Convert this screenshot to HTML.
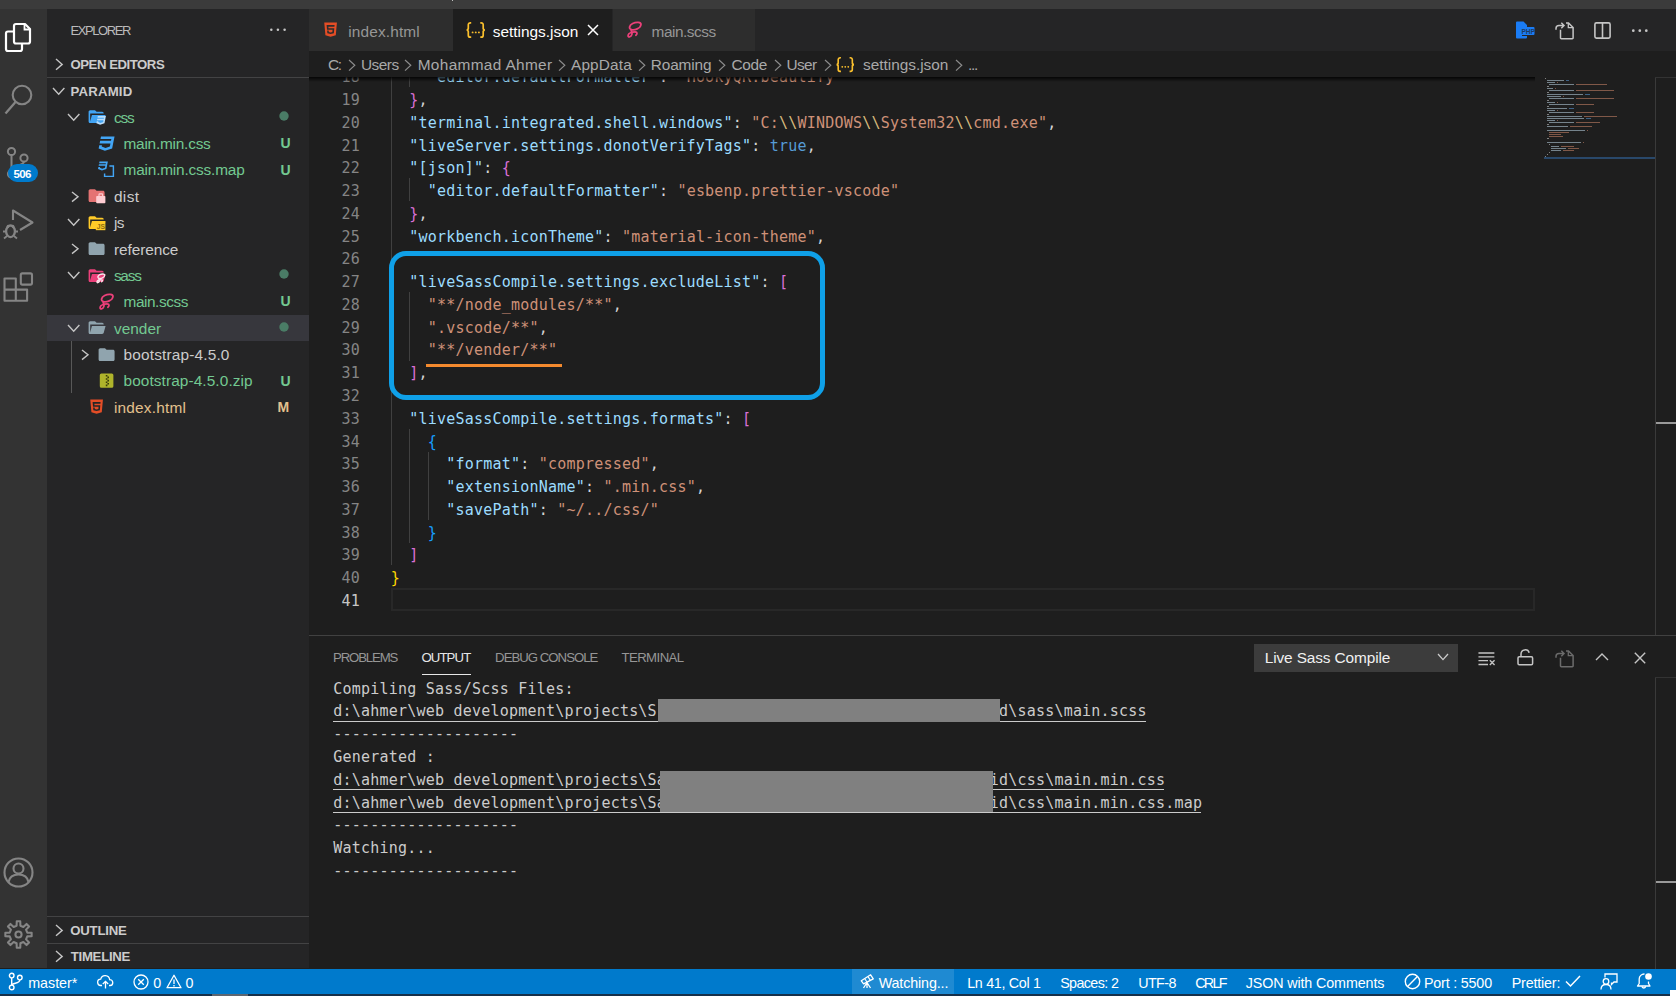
<!DOCTYPE html>
<html lang="en">
<head>
<meta charset="utf-8">
<title>settings.json - paramid - Visual Studio Code</title>
<style>
html,body{margin:0;padding:0;}
body{width:1680px;height:996px;overflow:hidden;background:#1e1e1e;position:relative;font-family:"Liberation Sans",sans-serif;}
#app{position:absolute;left:0;top:0;width:1680px;height:996px;overflow:hidden;}
#app>div,#app>span,#app>svg{position:absolute;display:block;white-space:pre;}
#app svg{overflow:visible;}
</style>
</head>
<body>
<div id="app">
<!-- ===== base surfaces ===== -->
<div style="left:0px;top:0px;width:1676px;height:8.6px;background:#3b3b3b;"></div>
<div style="left:0px;top:8.6px;width:47px;height:959.9px;background:#333333;"></div>
<div style="left:47px;top:8.6px;width:262px;height:959.9px;background:#252526;"></div>
<div style="left:309px;top:8.6px;width:1367px;height:42.0px;background:#252526;"></div>
<div style="left:309px;top:50.6px;width:1367px;height:917.9px;background:#1e1e1e;"></div>
<div style="left:1676px;top:0px;width:4px;height:996px;background:#ffffff;"></div>
<!-- ===== activity bar ===== -->
<svg style="left:4px;top:22px;" width="28" height="31" viewBox="0 0 28 31"><path d="M10 9.5 V4 a2 2 0 0 1 2 -2 h9 l5 5 v12.5 a2 2 0 0 1 -2 2 H12 a2 2 0 0 1 -2 -2 V9.5 H4 a2 2 0 0 0 -2 2 V27 a2 2 0 0 0 2 2 h12 a2 2 0 0 0 2 -2 v-5.5" fill="none" stroke="#ffffff" stroke-width="2.2" stroke-linejoin="round"/>
<path d="M20.5 2.5 v5 h5" fill="none" stroke="#ffffff" stroke-width="1.8"/></svg>
<svg style="left:3px;top:83px;" width="32" height="34" viewBox="0 0 32 34"><circle cx="19" cy="12" r="9.3" fill="none" stroke="#858585" stroke-width="2.1"/>
<path d="M12.5 19 L2.5 30.5" stroke="#858585" stroke-width="2.3" fill="none"/></svg>
<svg style="left:3px;top:144px;" width="34" height="40" viewBox="0 0 34 40"><circle cx="8.5" cy="7.5" r="3.6" fill="none" stroke="#858585" stroke-width="2"/>
<circle cx="21" cy="14" r="3.6" fill="none" stroke="#858585" stroke-width="2"/>
<path d="M8.5 11 V27 M21 17.5 c0 5 -12.5 3 -12.5 9" fill="none" stroke="#858585" stroke-width="2"/>
<circle cx="8.5" cy="30" r="3.6" fill="none" stroke="#858585" stroke-width="2"/></svg>
<div style="left:7.5px;top:164px;width:30px;height:18px;background:#007acc;border-radius:9px;"></div>
<span style="left:13.50px;top:166.52px;font-size:11.5px;line-height:15px;color:#ffffff;font-weight:700;letter-spacing:-0.594px;">506</span>
<svg style="left:2px;top:208px;" width="34" height="34" viewBox="0 0 34 34"><path d="M11 12 V2.5 L30.5 14.5 L18 22" fill="none" stroke="#858585" stroke-width="2.1" stroke-linejoin="round"/>
<ellipse cx="8.5" cy="23.3" rx="4.4" ry="5.8" fill="none" stroke="#858585" stroke-width="2.3"/>
<path d="M5 17.5 l2 2 M12 17.5 l-2 2 M1 23.5 h3.5 M12.5 23.5 h3.5 M2 30.5 l3 -2.5 M15 30.5 l-3 -2.5" fill="none" stroke="#858585" stroke-width="1.8"/></svg>
<svg style="left:3px;top:271px;" width="32" height="32" viewBox="0 0 32 32"><path d="M1.5 7.5 h11.3 v22.3 h-11.3 z M12.8 18.6 h11.3 v11.2 h-11.3 M1.5 18.6 h11.3" fill="none" stroke="#858585" stroke-width="2.1" stroke-linejoin="round"/>
<rect x="17.8" y="2.4" width="11.2" height="11.2" rx="1.5" fill="none" stroke="#858585" stroke-width="2.1"/></svg>
<svg style="left:3px;top:857px;" width="31" height="31" viewBox="0 0 31 31"><circle cx="15.5" cy="15.5" r="14" fill="none" stroke="#858585" stroke-width="2.1"/>
<circle cx="15.5" cy="11.5" r="5" fill="none" stroke="#858585" stroke-width="2.1"/>
<path d="M5.5 25 c1 -5 5 -7.5 10 -7.5 s9 2.5 10 7.5" fill="none" stroke="#858585" stroke-width="2.1"/></svg>
<svg style="left:3.5px;top:919.6px;" width="29" height="29" viewBox="0 0 31 31"><circle cx="15.5" cy="15.5" r="3.3" fill="none" stroke="#858585" stroke-width="2.2"/>
<path d="M13.48 6.12 L13.61 1.43 L17.39 1.43 L17.52 6.12 L20.71 7.44 L24.11 4.21 L26.79 6.89 L23.56 10.29 L24.88 13.48 L29.57 13.61 L29.57 17.39 L24.88 17.52 L23.56 20.71 L26.79 24.11 L24.11 26.79 L20.71 23.56 L17.52 24.88 L17.39 29.57 L13.61 29.57 L13.48 24.88 L10.29 23.56 L6.89 26.79 L4.21 24.11 L7.44 20.71 L6.12 17.52 L1.43 17.39 L1.43 13.61 L6.12 13.48 L7.44 10.29 L4.21 6.89 L6.89 4.21 L10.29 7.44 Z" fill="none" stroke="#858585" stroke-width="2.2" stroke-linejoin="round"/></svg>
<!-- ===== sidebar / explorer ===== -->
<span style="left:70.50px;top:22.00px;font-size:13px;line-height:17px;color:#bbbbbb;letter-spacing:-1.416px;">EXPLORER</span>
<svg style="left:268px;top:27px;" width="20" height="6" viewBox="0 0 20 6"><circle cx="3.3" cy="2.8" r="1.25" fill="#c5c5c5"/><circle cx="9.9" cy="2.8" r="1.25" fill="#c5c5c5"/><circle cx="16.6" cy="2.8" r="1.25" fill="#c5c5c5"/></svg>
<svg style="left:54.9px;top:58.199999999999996px;" width="8.2" height="12.8" viewBox="0 0 8.2 12.8"><path d="M1 1 L7.2 6.4 L1 11.8" fill="none" stroke="#c5c5c5" stroke-width="1.4"/></svg>
<span style="left:70.50px;top:55.73px;font-size:13.2px;line-height:17px;color:#cccccc;font-weight:700;letter-spacing:-0.475px;">OPEN EDITORS</span>
<div style="left:47px;top:77px;width:262px;height:1px;background:#434344;"></div>
<svg style="left:51.8px;top:87.4px;" width="13.4" height="8.2" viewBox="0 0 13.4 8.2"><path d="M1 1 L6.7 7.2 L12.4 1" fill="none" stroke="#c5c5c5" stroke-width="1.4"/></svg>
<span style="left:70.50px;top:82.73px;font-size:13.2px;line-height:17px;color:#cccccc;font-weight:700;letter-spacing:0.190px;">PARAMID</span>
<div style="left:47px;top:916px;width:262px;height:1px;background:#434344;"></div>
<svg style="left:54.9px;top:924.0px;" width="8.2" height="12.8" viewBox="0 0 8.2 12.8"><path d="M1 1 L7.2 6.4 L1 11.8" fill="none" stroke="#c5c5c5" stroke-width="1.4"/></svg>
<span style="left:70.20px;top:922.13px;font-size:13.2px;line-height:17px;color:#cccccc;font-weight:700;letter-spacing:-0.198px;">OUTLINE</span>
<div style="left:47px;top:943px;width:262px;height:1px;background:#434344;"></div>
<svg style="left:54.9px;top:950.4px;" width="8.2" height="12.8" viewBox="0 0 8.2 12.8"><path d="M1 1 L7.2 6.4 L1 11.8" fill="none" stroke="#c5c5c5" stroke-width="1.4"/></svg>
<span style="left:70.70px;top:947.93px;font-size:13.2px;line-height:17px;color:#cccccc;font-weight:700;letter-spacing:-0.264px;">TIMELINE</span>
<div style="left:47px;top:314.98px;width:262px;height:25.8px;background:#37373d;"></div>
<div style="left:71px;top:340.88px;width:1px;height:52.5px;background:#585858;"></div>
<svg style="left:67.3px;top:112.7px;" width="13.4" height="8.2" viewBox="0 0 13.4 8.2"><path d="M1 1 L6.7 7.2 L12.4 1" fill="none" stroke="#c5c5c5" stroke-width="1.4"/></svg>
<svg style="left:86.9px;top:107.4px;" width="19.2" height="19.2" viewBox="0 0 24 24"><path d="M19 20H4c-1.11 0-2-.9-2-2V6c0-1.11.89-2 2-2h6l2 2h7a2 2 0 0 1 2 2H4v10l2.14-8h17.07l-2.28 8.5c-.23.87-1.01 1.5-1.93 1.5z" fill="#42a5f5"/><g transform="translate(10.5 9.5) scale(.6)"><path d="m5 3-.65 3.34h13.59L17.5 8.5H3.92l-.66 3.33h13.59l-.76 3.81-5.48 1.81-4.75-1.81.33-1.64H2.85l-.79 4 7.85 3 9.05-3 1.2-6.03.24-1.21L21.94 3H5z" fill="#bbdefb"/></g></svg>
<span style="left:113.90px;top:107.76px;font-size:15.4px;line-height:20px;color:#73c991;letter-spacing:-1.147px;">css</span>
<svg style="left:279.1px;top:111.3px;" width="10" height="10" viewBox="0 0 10 10"><circle cx="5" cy="5" r="4.7" fill="#4a7c66"/></svg>
<svg style="left:96.8px;top:133.76000000000002px;" width="19.2" height="19.2" viewBox="0 0 24 24"><path d="m5 3-.65 3.34h13.59L17.5 8.5H3.92l-.66 3.33h13.59l-.76 3.81-5.48 1.81-4.75-1.81.33-1.64H2.85l-.79 4 7.85 3 9.05-3 1.2-6.03.24-1.21L21.94 3H5z" fill="#42a5f5"/></svg>
<span style="left:123.50px;top:134.12px;font-size:15.4px;line-height:20px;color:#73c991;letter-spacing:-0.227px;">main.min.css</span>
<span style="left:280.60px;top:134.31px;font-size:14px;line-height:18px;color:#73c991;font-weight:700;">U</span>
<svg style="left:96.8px;top:160.12px;" width="19.2" height="19.2" viewBox="0 0 24 24"><g transform="translate(0 0) scale(.62)"><path d="m5 3-.65 3.34h13.59L17.5 8.5H3.92l-.66 3.33h13.59l-.76 3.81-5.48 1.81-4.75-1.81.33-1.64H2.85l-.79 4 7.85 3 9.05-3 1.2-6.03.24-1.21L21.94 3H5z" fill="#42a5f5"/></g><path d="M15.5 7.5 h5 v13 h-11 v-3.5" fill="none" stroke="#42a5f5" stroke-width="1.8"/></svg>
<span style="left:123.50px;top:160.48px;font-size:15.4px;line-height:20px;color:#73c991;letter-spacing:-0.181px;">main.min.css.map</span>
<span style="left:280.60px;top:160.67px;font-size:14px;line-height:18px;color:#73c991;font-weight:700;">U</span>
<svg style="left:71.2px;top:190.67999999999998px;" width="8.0" height="11.6" viewBox="0 0 8.0 11.6"><path d="M1 1 L7 5.8 L1 10.6" fill="none" stroke="#c5c5c5" stroke-width="1.4"/></svg>
<svg style="left:86.9px;top:186.48px;" width="19.2" height="19.2" viewBox="0 0 24 24"><path d="M10 4H4c-1.11 0-2 .89-2 2v12c0 1.1.9 2 2 2h16c1.1 0 2-.9 2-2V8c0-1.11-.9-2-2-2h-8l-2-2z" fill="#e57373"/><path d="M12.5 12.5h9.5c.6 0 1 .4 1 1v7c0 .6-.4 1-1 1h-9.5c-.6 0-1-.4-1-1v-7c0-.6.4-1 1-1z" fill="#ffcdd2"/><path d="M15 12.5v-1.8c0-.5.4-.9.9-.9h2.7c.5 0 .9.4.9.9v1.8" fill="none" stroke="#ffcdd2" stroke-width="1.4"/></svg>
<span style="left:113.90px;top:186.84px;font-size:15.4px;line-height:20px;color:#cccccc;letter-spacing:0.382px;">dist</span>
<svg style="left:67.3px;top:218.14000000000001px;" width="13.4" height="8.2" viewBox="0 0 13.4 8.2"><path d="M1 1 L6.7 7.2 L12.4 1" fill="none" stroke="#c5c5c5" stroke-width="1.4"/></svg>
<svg style="left:86.9px;top:212.84px;" width="19.2" height="19.2" viewBox="0 0 24 24"><path d="M19 20H4c-1.11 0-2-.9-2-2V6c0-1.11.89-2 2-2h6l2 2h7a2 2 0 0 1 2 2H4v10l2.14-8h17.07l-2.28 8.5c-.23.87-1.01 1.5-1.93 1.5z" fill="#ffca28"/><rect x="11" y="11" width="12" height="10.5" fill="#ffca28"/><text x="12.2" y="20.3" font-family="Liberation Sans, sans-serif" font-weight="700" font-size="8.5" fill="#8d6e10">JS</text></svg>
<span style="left:113.90px;top:213.20px;font-size:15.4px;line-height:20px;color:#cccccc;letter-spacing:-0.625px;">js</span>
<svg style="left:71.2px;top:243.4px;" width="8.0" height="11.6" viewBox="0 0 8.0 11.6"><path d="M1 1 L7 5.8 L1 10.6" fill="none" stroke="#c5c5c5" stroke-width="1.4"/></svg>
<svg style="left:86.9px;top:239.20000000000002px;" width="19.2" height="19.2" viewBox="0 0 24 24"><path d="M10 4H4c-1.11 0-2 .89-2 2v12c0 1.1.9 2 2 2h16c1.1 0 2-.9 2-2V8c0-1.11-.9-2-2-2h-8l-2-2z" fill="#90a4ae"/></svg>
<span style="left:113.90px;top:239.56px;font-size:15.4px;line-height:20px;color:#cccccc;letter-spacing:-0.066px;">reference</span>
<svg style="left:67.3px;top:270.85999999999996px;" width="13.4" height="8.2" viewBox="0 0 13.4 8.2"><path d="M1 1 L6.7 7.2 L12.4 1" fill="none" stroke="#c5c5c5" stroke-width="1.4"/></svg>
<svg style="left:86.9px;top:265.55999999999995px;" width="19.2" height="19.2" viewBox="0 0 24 24"><path d="M19 20H4c-1.11 0-2-.9-2-2V6c0-1.11.89-2 2-2h6l2 2h7a2 2 0 0 1 2 2H4v10l2.14-8h17.07l-2.28 8.5c-.23.87-1.01 1.5-1.93 1.5z" fill="#ec407a"/><g transform="translate(10.2 8.2) scale(.6)"><path d="M20 5.6C20.3 2.6 14.2 1.9 9.6 4.4C5 6.9 4.4 10.9 8 12C12 13.1 19.5 10.6 20 5.6M7.6 11.6C7 14 9.6 15.6 8.6 18.2C7.5 21.6 3.4 22.1 3.9 19.1C4.4 16.5 9 15 12.6 15C15.7 15 15.6 17.6 13.6 19.1" fill="none" stroke="#fce4ec" stroke-width="3" stroke-linecap="round"/></g></svg>
<span style="left:113.90px;top:265.92px;font-size:15.4px;line-height:20px;color:#73c991;letter-spacing:-1.219px;">sass</span>
<svg style="left:279.1px;top:269.46px;" width="10" height="10" viewBox="0 0 10 10"><circle cx="5" cy="5" r="4.7" fill="#4a7c66"/></svg>
<svg style="left:96.8px;top:291.91999999999996px;" width="19.2" height="19.2" viewBox="0 0 24 24"><path d="M20 5.6C20.3 2.6 14.2 1.9 9.6 4.4C5 6.9 4.4 10.9 8 12C12 13.1 19.5 10.6 20 5.6M7.6 11.6C7 14 9.6 15.6 8.6 18.2C7.5 21.6 3.4 22.1 3.9 19.1C4.4 16.5 9 15 12.6 15C15.7 15 15.6 17.6 13.6 19.1" fill="none" stroke="#ec407a" stroke-width="2.2" stroke-linecap="round"/></svg>
<span style="left:123.50px;top:292.28px;font-size:15.4px;line-height:20px;color:#73c991;letter-spacing:-0.440px;">main.scss</span>
<span style="left:280.60px;top:292.47px;font-size:14px;line-height:18px;color:#73c991;font-weight:700;">U</span>
<svg style="left:67.3px;top:323.58px;" width="13.4" height="8.2" viewBox="0 0 13.4 8.2"><path d="M1 1 L6.7 7.2 L12.4 1" fill="none" stroke="#c5c5c5" stroke-width="1.4"/></svg>
<svg style="left:86.9px;top:318.28px;" width="19.2" height="19.2" viewBox="0 0 24 24"><path d="M19 20H4c-1.11 0-2-.9-2-2V6c0-1.11.89-2 2-2h6l2 2h7a2 2 0 0 1 2 2H4v10l2.14-8h17.07l-2.28 8.5c-.23.87-1.01 1.5-1.93 1.5z" fill="#90a4ae"/></svg>
<span style="left:113.90px;top:318.64px;font-size:15.4px;line-height:20px;color:#73c991;letter-spacing:0.048px;">vender</span>
<svg style="left:279.1px;top:322.18px;" width="10" height="10" viewBox="0 0 10 10"><circle cx="5" cy="5" r="4.7" fill="#4a7c66"/></svg>
<svg style="left:80.8px;top:348.84px;" width="8.0" height="11.6" viewBox="0 0 8.0 11.6"><path d="M1 1 L7 5.8 L1 10.6" fill="none" stroke="#c5c5c5" stroke-width="1.4"/></svg>
<svg style="left:96.8px;top:344.64px;" width="19.2" height="19.2" viewBox="0 0 24 24"><path d="M10 4H4c-1.11 0-2 .89-2 2v12c0 1.1.9 2 2 2h16c1.1 0 2-.9 2-2V8c0-1.11-.9-2-2-2h-8l-2-2z" fill="#90a4ae"/></svg>
<span style="left:123.50px;top:345.00px;font-size:15.4px;line-height:20px;color:#cccccc;letter-spacing:0.169px;">bootstrap-4.5.0</span>
<svg style="left:96.8px;top:371.0px;" width="19.2" height="19.2" viewBox="0 0 24 24"><path d="M5.5 3h13a2 2 0 0 1 2 2v14a2 2 0 0 1-2 2h-13a2 2 0 0 1-2-2V5a2 2 0 0 1 2-2z" fill="#afb42b"/><path d="M11 5h2v2h-2zM13 7h2v2h-2zM11 9h2v2h-2zM13 11h2v2h-2zM11 13h2v2h-2zM13 15h2v2h-2zM11 17h2v2h-2z" fill="#3a3d0a"/></svg>
<span style="left:123.50px;top:371.36px;font-size:15.4px;line-height:20px;color:#73c991;letter-spacing:0.090px;">bootstrap-4.5.0.zip</span>
<span style="left:280.60px;top:371.55px;font-size:14px;line-height:18px;color:#73c991;font-weight:700;">U</span>
<svg style="left:86.9px;top:397.35999999999996px;" width="19.2" height="19.2" viewBox="0 0 24 24"><path d="m12 17.56 4.07-1.13.55-6.1H9.38L9.2 8.3h7.6l.2-1.99H7l.56 6.01h6.89l-.23 2.58-2.22.6-2.22-.6-.14-1.66h-2l.29 3.19L12 17.56M4.07 3h15.86L18.5 19.2 12 21l-6.5-1.8L4.07 3z" fill="#e44d26"/></svg>
<span style="left:113.90px;top:397.72px;font-size:15.4px;line-height:20px;color:#e2c08d;letter-spacing:0.205px;">index.html</span>
<span style="left:277.50px;top:397.91px;font-size:14px;line-height:18px;color:#e2c08d;font-weight:700;">M</span>
<!-- ===== code editor ===== -->
<div style="left:390.8px;top:77px;width:1px;height:488.47px;background:#404040;"></div>
<div style="left:409.29px;top:77px;width:1px;height:10.299999999999997px;background:#404040;"></div>
<div style="left:409.29px;top:178.38px;width:1px;height:22.77px;background:#404040;"></div>
<div style="left:409.29px;top:292.23px;width:1px;height:68.31px;background:#404040;"></div>
<div style="left:409.29px;top:428.85px;width:1px;height:113.85px;background:#404040;"></div>
<div style="left:427.78000000000003px;top:451.62px;width:1px;height:68.31px;background:#404040;"></div>
<div style="left:391.2px;top:588.24px;width:1143.8px;height:22.77px;background:transparent;box-sizing:border-box;border:2px solid #282828;"></div>
<span style="left:341.41px;top:67.24px;font-size:15px;line-height:20px;color:#858585;font-family:'DejaVu Sans Mono', 'Liberation Mono', monospace;letter-spacing:0.214px;">18</span>
<span style="left:341.41px;top:90.01px;font-size:15px;line-height:20px;color:#858585;font-family:'DejaVu Sans Mono', 'Liberation Mono', monospace;letter-spacing:0.214px;">19</span>
<span style="left:341.41px;top:112.78px;font-size:15px;line-height:20px;color:#858585;font-family:'DejaVu Sans Mono', 'Liberation Mono', monospace;letter-spacing:0.214px;">20</span>
<span style="left:341.41px;top:135.55px;font-size:15px;line-height:20px;color:#858585;font-family:'DejaVu Sans Mono', 'Liberation Mono', monospace;letter-spacing:0.214px;">21</span>
<span style="left:341.41px;top:158.32px;font-size:15px;line-height:20px;color:#858585;font-family:'DejaVu Sans Mono', 'Liberation Mono', monospace;letter-spacing:0.214px;">22</span>
<span style="left:341.41px;top:181.09px;font-size:15px;line-height:20px;color:#858585;font-family:'DejaVu Sans Mono', 'Liberation Mono', monospace;letter-spacing:0.214px;">23</span>
<span style="left:341.41px;top:203.86px;font-size:15px;line-height:20px;color:#858585;font-family:'DejaVu Sans Mono', 'Liberation Mono', monospace;letter-spacing:0.214px;">24</span>
<span style="left:341.41px;top:226.63px;font-size:15px;line-height:20px;color:#858585;font-family:'DejaVu Sans Mono', 'Liberation Mono', monospace;letter-spacing:0.214px;">25</span>
<span style="left:341.41px;top:249.40px;font-size:15px;line-height:20px;color:#858585;font-family:'DejaVu Sans Mono', 'Liberation Mono', monospace;letter-spacing:0.214px;">26</span>
<span style="left:341.41px;top:272.17px;font-size:15px;line-height:20px;color:#858585;font-family:'DejaVu Sans Mono', 'Liberation Mono', monospace;letter-spacing:0.214px;">27</span>
<span style="left:341.41px;top:294.94px;font-size:15px;line-height:20px;color:#858585;font-family:'DejaVu Sans Mono', 'Liberation Mono', monospace;letter-spacing:0.214px;">28</span>
<span style="left:341.41px;top:317.71px;font-size:15px;line-height:20px;color:#858585;font-family:'DejaVu Sans Mono', 'Liberation Mono', monospace;letter-spacing:0.214px;">29</span>
<span style="left:341.41px;top:340.48px;font-size:15px;line-height:20px;color:#858585;font-family:'DejaVu Sans Mono', 'Liberation Mono', monospace;letter-spacing:0.214px;">30</span>
<span style="left:341.41px;top:363.25px;font-size:15px;line-height:20px;color:#858585;font-family:'DejaVu Sans Mono', 'Liberation Mono', monospace;letter-spacing:0.214px;">31</span>
<span style="left:341.41px;top:386.02px;font-size:15px;line-height:20px;color:#858585;font-family:'DejaVu Sans Mono', 'Liberation Mono', monospace;letter-spacing:0.214px;">32</span>
<span style="left:341.41px;top:408.79px;font-size:15px;line-height:20px;color:#858585;font-family:'DejaVu Sans Mono', 'Liberation Mono', monospace;letter-spacing:0.214px;">33</span>
<span style="left:341.41px;top:431.56px;font-size:15px;line-height:20px;color:#858585;font-family:'DejaVu Sans Mono', 'Liberation Mono', monospace;letter-spacing:0.214px;">34</span>
<span style="left:341.41px;top:454.33px;font-size:15px;line-height:20px;color:#858585;font-family:'DejaVu Sans Mono', 'Liberation Mono', monospace;letter-spacing:0.214px;">35</span>
<span style="left:341.41px;top:477.10px;font-size:15px;line-height:20px;color:#858585;font-family:'DejaVu Sans Mono', 'Liberation Mono', monospace;letter-spacing:0.214px;">36</span>
<span style="left:341.41px;top:499.87px;font-size:15px;line-height:20px;color:#858585;font-family:'DejaVu Sans Mono', 'Liberation Mono', monospace;letter-spacing:0.214px;">37</span>
<span style="left:341.41px;top:522.64px;font-size:15px;line-height:20px;color:#858585;font-family:'DejaVu Sans Mono', 'Liberation Mono', monospace;letter-spacing:0.214px;">38</span>
<span style="left:341.41px;top:545.41px;font-size:15px;line-height:20px;color:#858585;font-family:'DejaVu Sans Mono', 'Liberation Mono', monospace;letter-spacing:0.214px;">39</span>
<span style="left:341.41px;top:568.18px;font-size:15px;line-height:20px;color:#858585;font-family:'DejaVu Sans Mono', 'Liberation Mono', monospace;letter-spacing:0.214px;">40</span>
<span style="left:341.41px;top:590.95px;font-size:15px;line-height:20px;color:#c6c6c6;font-family:'DejaVu Sans Mono', 'Liberation Mono', monospace;letter-spacing:0.214px;">41</span>
<span style="left:427.78px;top:67.24px;font-size:15px;line-height:20px;color:#d4d4d4;font-family:'DejaVu Sans Mono', 'Liberation Mono', monospace;letter-spacing:0.214px;"><span style="color:#9cdcfe">"editor.defaultFormatter"</span>: <span style="color:#ce9178">"HookyQR.beautify"</span></span>
<span style="left:409.29px;top:90.01px;font-size:15px;line-height:20px;color:#d4d4d4;font-family:'DejaVu Sans Mono', 'Liberation Mono', monospace;letter-spacing:0.214px;"><span style="color:#da70d6">}</span>,</span>
<span style="left:409.29px;top:112.78px;font-size:15px;line-height:20px;color:#d4d4d4;font-family:'DejaVu Sans Mono', 'Liberation Mono', monospace;letter-spacing:0.214px;"><span style="color:#9cdcfe">"terminal.integrated.shell.windows"</span>: <span style="color:#ce9178">"C:</span><span style="color:#d7ba7d">\\</span><span style="color:#ce9178">WINDOWS</span><span style="color:#d7ba7d">\\</span><span style="color:#ce9178">System32</span><span style="color:#d7ba7d">\\</span><span style="color:#ce9178">cmd.exe"</span>,</span>
<span style="left:409.29px;top:135.55px;font-size:15px;line-height:20px;color:#d4d4d4;font-family:'DejaVu Sans Mono', 'Liberation Mono', monospace;letter-spacing:0.214px;"><span style="color:#9cdcfe">"liveServer.settings.donotVerifyTags"</span>: <span style="color:#569cd6">true</span>,</span>
<span style="left:409.29px;top:158.32px;font-size:15px;line-height:20px;color:#d4d4d4;font-family:'DejaVu Sans Mono', 'Liberation Mono', monospace;letter-spacing:0.214px;"><span style="color:#9cdcfe">"[json]"</span>: <span style="color:#da70d6">{</span></span>
<span style="left:427.78px;top:181.09px;font-size:15px;line-height:20px;color:#d4d4d4;font-family:'DejaVu Sans Mono', 'Liberation Mono', monospace;letter-spacing:0.214px;"><span style="color:#9cdcfe">"editor.defaultFormatter"</span>: <span style="color:#ce9178">"esbenp.prettier-vscode"</span></span>
<span style="left:409.29px;top:203.86px;font-size:15px;line-height:20px;color:#d4d4d4;font-family:'DejaVu Sans Mono', 'Liberation Mono', monospace;letter-spacing:0.214px;"><span style="color:#da70d6">}</span>,</span>
<span style="left:409.29px;top:226.63px;font-size:15px;line-height:20px;color:#d4d4d4;font-family:'DejaVu Sans Mono', 'Liberation Mono', monospace;letter-spacing:0.214px;"><span style="color:#9cdcfe">"workbench.iconTheme"</span>: <span style="color:#ce9178">"material-icon-theme"</span>,</span>
<span style="left:409.29px;top:272.17px;font-size:15px;line-height:20px;color:#d4d4d4;font-family:'DejaVu Sans Mono', 'Liberation Mono', monospace;letter-spacing:0.214px;"><span style="color:#9cdcfe">"liveSassCompile.settings.excludeList"</span>: <span style="color:#da70d6">[</span></span>
<span style="left:427.78px;top:294.94px;font-size:15px;line-height:20px;color:#d4d4d4;font-family:'DejaVu Sans Mono', 'Liberation Mono', monospace;letter-spacing:0.214px;"><span style="color:#ce9178">"**/node_modules/**"</span>,</span>
<span style="left:427.78px;top:317.71px;font-size:15px;line-height:20px;color:#d4d4d4;font-family:'DejaVu Sans Mono', 'Liberation Mono', monospace;letter-spacing:0.214px;"><span style="color:#ce9178">".vscode/**"</span>,</span>
<span style="left:427.78px;top:340.48px;font-size:15px;line-height:20px;color:#d4d4d4;font-family:'DejaVu Sans Mono', 'Liberation Mono', monospace;letter-spacing:0.214px;"><span style="color:#ce9178">"**/vender/**"</span></span>
<span style="left:409.29px;top:363.25px;font-size:15px;line-height:20px;color:#d4d4d4;font-family:'DejaVu Sans Mono', 'Liberation Mono', monospace;letter-spacing:0.214px;"><span style="color:#da70d6">]</span>,</span>
<span style="left:409.29px;top:408.79px;font-size:15px;line-height:20px;color:#d4d4d4;font-family:'DejaVu Sans Mono', 'Liberation Mono', monospace;letter-spacing:0.214px;"><span style="color:#9cdcfe">"liveSassCompile.settings.formats"</span>: <span style="color:#da70d6">[</span></span>
<span style="left:427.78px;top:431.56px;font-size:15px;line-height:20px;color:#d4d4d4;font-family:'DejaVu Sans Mono', 'Liberation Mono', monospace;letter-spacing:0.214px;"><span style="color:#179fff">{</span></span>
<span style="left:446.27px;top:454.33px;font-size:15px;line-height:20px;color:#d4d4d4;font-family:'DejaVu Sans Mono', 'Liberation Mono', monospace;letter-spacing:0.214px;"><span style="color:#9cdcfe">"format"</span>: <span style="color:#ce9178">"compressed"</span>,</span>
<span style="left:446.27px;top:477.10px;font-size:15px;line-height:20px;color:#d4d4d4;font-family:'DejaVu Sans Mono', 'Liberation Mono', monospace;letter-spacing:0.214px;"><span style="color:#9cdcfe">"extensionName"</span>: <span style="color:#ce9178">".min.css"</span>,</span>
<span style="left:446.27px;top:499.87px;font-size:15px;line-height:20px;color:#d4d4d4;font-family:'DejaVu Sans Mono', 'Liberation Mono', monospace;letter-spacing:0.214px;"><span style="color:#9cdcfe">"savePath"</span>: <span style="color:#ce9178">"~/../css/"</span></span>
<span style="left:427.78px;top:522.64px;font-size:15px;line-height:20px;color:#d4d4d4;font-family:'DejaVu Sans Mono', 'Liberation Mono', monospace;letter-spacing:0.214px;"><span style="color:#179fff">}</span></span>
<span style="left:409.29px;top:545.41px;font-size:15px;line-height:20px;color:#d4d4d4;font-family:'DejaVu Sans Mono', 'Liberation Mono', monospace;letter-spacing:0.214px;"><span style="color:#da70d6">]</span></span>
<span style="left:390.80px;top:568.18px;font-size:15px;line-height:20px;color:#d4d4d4;font-family:'DejaVu Sans Mono', 'Liberation Mono', monospace;letter-spacing:0.214px;"><span style="color:#ffd700">}</span></span>
<div style="left:388.7px;top:251.2px;width:436.5px;height:148.8px;background:transparent;box-sizing:border-box;border:5.4px solid #0fa0e8;border-radius:17px;"></div>
<div style="left:425.8px;top:363.6px;width:136.2px;height:3.5px;background:#f48a2e;"></div>
<!-- minimap -->
<div style="left:1545.0px;top:77.6px;width:1px;height:1.5px;background:#808080;"></div>
<div style="left:1547.0px;top:79.6px;width:17px;height:1.5px;background:#75838c;"></div>
<div style="left:1565.5px;top:79.6px;width:3px;height:1.5px;background:#3f6286;"></div>
<div style="left:1547.0px;top:81.6px;width:8px;height:1.5px;background:#75838c;"></div>
<div style="left:1556.5px;top:81.6px;width:1px;height:1.5px;background:#805848;"></div>
<div style="left:1549.0px;top:83.6px;width:25px;height:1.5px;background:#75838c;"></div>
<div style="left:1575.5px;top:83.6px;width:31px;height:1.5px;background:#805848;"></div>
<div style="left:1547.0px;top:85.6px;width:2px;height:1.5px;background:#808080;"></div>
<div style="left:1547.0px;top:87.6px;width:6px;height:1.5px;background:#75838c;"></div>
<div style="left:1554.5px;top:87.6px;width:1px;height:1.5px;background:#805848;"></div>
<div style="left:1549.0px;top:89.6px;width:25px;height:1.5px;background:#75838c;"></div>
<div style="left:1575.5px;top:89.6px;width:38px;height:1.5px;background:#805848;"></div>
<div style="left:1547.0px;top:91.6px;width:2px;height:1.5px;background:#808080;"></div>
<div style="left:1547.0px;top:93.6px;width:36px;height:1.5px;background:#75838c;"></div>
<div style="left:1584.5px;top:93.6px;width:5px;height:1.5px;background:#3f6286;"></div>
<div style="left:1547.0px;top:95.6px;width:14px;height:1.5px;background:#75838c;"></div>
<div style="left:1562.5px;top:95.6px;width:1px;height:1.5px;background:#805848;"></div>
<div style="left:1549.0px;top:97.6px;width:25px;height:1.5px;background:#75838c;"></div>
<div style="left:1575.5px;top:97.6px;width:38px;height:1.5px;background:#805848;"></div>
<div style="left:1547.0px;top:99.6px;width:2px;height:1.5px;background:#808080;"></div>
<div style="left:1547.0px;top:101.6px;width:8px;height:1.5px;background:#75838c;"></div>
<div style="left:1556.5px;top:101.6px;width:1px;height:1.5px;background:#805848;"></div>
<div style="left:1549.0px;top:103.6px;width:25px;height:1.5px;background:#75838c;"></div>
<div style="left:1575.5px;top:103.6px;width:18px;height:1.5px;background:#805848;"></div>
<div style="left:1547.0px;top:105.6px;width:2px;height:1.5px;background:#808080;"></div>
<div style="left:1547.0px;top:107.6px;width:20px;height:1.5px;background:#75838c;"></div>
<div style="left:1568.5px;top:107.6px;width:5px;height:1.5px;background:#3f6286;"></div>
<div style="left:1547.0px;top:109.6px;width:8px;height:1.5px;background:#75838c;"></div>
<div style="left:1556.5px;top:109.6px;width:1px;height:1.5px;background:#805848;"></div>
<div style="left:1549.0px;top:111.6px;width:25px;height:1.5px;background:#75838c;"></div>
<div style="left:1575.5px;top:111.6px;width:18px;height:1.5px;background:#805848;"></div>
<div style="left:1547.0px;top:113.6px;width:2px;height:1.5px;background:#808080;"></div>
<div style="left:1547.0px;top:115.6px;width:35px;height:1.5px;background:#75838c;"></div>
<div style="left:1583.5px;top:115.6px;width:33px;height:1.5px;background:#805848;"></div>
<div style="left:1547.0px;top:117.6px;width:37px;height:1.5px;background:#75838c;"></div>
<div style="left:1585.5px;top:117.6px;width:5px;height:1.5px;background:#3f6286;"></div>
<div style="left:1547.0px;top:119.6px;width:8px;height:1.5px;background:#75838c;"></div>
<div style="left:1556.5px;top:119.6px;width:1px;height:1.5px;background:#805848;"></div>
<div style="left:1549.0px;top:121.6px;width:25px;height:1.5px;background:#75838c;"></div>
<div style="left:1575.5px;top:121.6px;width:24px;height:1.5px;background:#805848;"></div>
<div style="left:1547.0px;top:123.6px;width:2px;height:1.5px;background:#808080;"></div>
<div style="left:1547.0px;top:125.6px;width:21px;height:1.5px;background:#75838c;"></div>
<div style="left:1569.5px;top:125.6px;width:22px;height:1.5px;background:#805848;"></div>
<div style="left:1547.0px;top:129.6px;width:38px;height:1.5px;background:#75838c;"></div>
<div style="left:1586.5px;top:129.6px;width:1px;height:1.5px;background:#805848;"></div>
<div style="left:1549.0px;top:131.6px;width:20px;height:1.5px;background:#805848;"></div>
<div style="left:1549.0px;top:133.6px;width:12px;height:1.5px;background:#805848;"></div>
<div style="left:1549.0px;top:135.6px;width:14px;height:1.5px;background:#805848;"></div>
<div style="left:1547.0px;top:137.6px;width:2px;height:1.5px;background:#808080;"></div>
<div style="left:1547.0px;top:141.6px;width:34px;height:1.5px;background:#75838c;"></div>
<div style="left:1582.5px;top:141.6px;width:1px;height:1.5px;background:#805848;"></div>
<div style="left:1549.0px;top:143.6px;width:1px;height:1.5px;background:#808080;"></div>
<div style="left:1551.0px;top:145.6px;width:8px;height:1.5px;background:#75838c;"></div>
<div style="left:1560.5px;top:145.6px;width:13px;height:1.5px;background:#805848;"></div>
<div style="left:1551.0px;top:147.6px;width:15px;height:1.5px;background:#75838c;"></div>
<div style="left:1567.5px;top:147.6px;width:11px;height:1.5px;background:#805848;"></div>
<div style="left:1551.0px;top:149.6px;width:10px;height:1.5px;background:#75838c;"></div>
<div style="left:1562.5px;top:149.6px;width:11px;height:1.5px;background:#805848;"></div>
<div style="left:1549.0px;top:151.6px;width:1px;height:1.5px;background:#808080;"></div>
<div style="left:1547.0px;top:153.6px;width:1px;height:1.5px;background:#808080;"></div>
<div style="left:1545.0px;top:155.6px;width:1px;height:1.5px;background:#808080;"></div>
<div style="left:1544px;top:157.4px;width:110.5px;height:1.4px;background:#29486a;"></div>
<div style="left:1655px;top:77px;width:1px;height:558px;background:#3a3a3a;"></div>
<div style="left:1655px;top:77px;width:21px;height:1px;background:#333333;"></div>
<div style="left:1656px;top:422.4px;width:20px;height:2px;background:#9a9a9a;"></div>
<!-- ===== editor tabs ===== -->
<div style="left:309px;top:8.6px;width:144px;height:42.0px;background:#2d2d2d;"></div>
<div style="left:453.3px;top:8.6px;width:158.4px;height:42.0px;background:#1e1e1e;"></div>
<div style="left:451.5px;top:0px;width:1.5px;height:1px;background:#c0c0c0;"></div>
<div style="left:612.6px;top:8.6px;width:142.6px;height:42.0px;background:#2d2d2d;"></div>
<svg style="left:321px;top:20.4px;" width="19.2" height="19.2" viewBox="0 0 24 24"><path d="m12 17.56 4.07-1.13.55-6.1H9.38L9.2 8.3h7.6l.2-1.99H7l.56 6.01h6.89l-.23 2.58-2.22.6-2.22-.6-.14-1.66h-2l.29 3.19L12 17.56M4.07 3h15.86L18.5 19.2 12 21l-6.5-1.8L4.07 3z" fill="#e44d26"/></svg>
<span style="left:348.20px;top:21.66px;font-size:15.4px;line-height:20px;color:#969696;letter-spacing:0.160px;">index.html</span>
<svg style="left:466.2px;top:22.0px;" width="19.5" height="16.0" viewBox="0 0 19.5 16"><path d="M5.2 .8 H4.3 a2 2 0 0 0 -2 2 v3 a2 2 0 0 1 -1.6 2.2 a2 2 0 0 1 1.6 2.2 v3 a2 2 0 0 0 2 2 h.9 M14.3 .8 h.9 a2 2 0 0 1 2 2 v3 a2 2 0 0 0 1.6 2.2 a2 2 0 0 0 -1.6 2.2 v3 a2 2 0 0 1 -2 2 h-.9" fill="none" stroke="#fbc02d" stroke-width="1.7"/>
<circle cx="6.6" cy="10.4" r=".95" fill="#fbc02d"/><circle cx="9.75" cy="10.4" r=".95" fill="#fbc02d"/><circle cx="12.9" cy="10.4" r=".95" fill="#fbc02d"/></svg>
<span style="left:492.70px;top:21.66px;font-size:15.4px;line-height:20px;color:#ffffff;letter-spacing:0.011px;">settings.json</span>
<svg style="left:586.5px;top:23.6px;" width="12" height="12" viewBox="0 0 12 12"><path d="M1 1 L11 11 M11 1 L1 11" stroke="#ffffff" stroke-width="1.5" fill="none"/></svg>
<svg style="left:625px;top:20.4px;" width="19.2" height="19.2" viewBox="0 0 24 24"><path d="M20 5.6C20.3 2.6 14.2 1.9 9.6 4.4C5 6.9 4.4 10.9 8 12C12 13.1 19.5 10.6 20 5.6M7.6 11.6C7 14 9.6 15.6 8.6 18.2C7.5 21.6 3.4 22.1 3.9 19.1C4.4 16.5 9 15 12.6 15C15.7 15 15.6 17.6 13.6 19.1" fill="none" stroke="#ec407a" stroke-width="2.2" stroke-linecap="round"/></svg>
<span style="left:651.60px;top:21.66px;font-size:15.4px;line-height:20px;color:#969696;letter-spacing:-0.490px;">main.scss</span>
<svg style="left:1515px;top:21px;" width="20" height="18" viewBox="0 0 20 18"><path d="M1 1.5 a1 1 0 0 1 1 -1 h6.5 l3.5 3.5 v3 h-5 v8 h5 v1.5 a1 1 0 0 1 -1 1 h-9 a1 1 0 0 1 -1 -1 z" fill="#1a7cf5"/>
<rect x="5.5" y="6" width="14" height="8" rx="1" fill="#1a7cf5"/><text x="6.5" y="12.6" font-family="Liberation Sans, sans-serif" font-weight="700" font-size="6.5" fill="#1e3a5f">PHP</text></svg>
<svg style="left:1554px;top:20px;" width="21" height="20" viewBox="0 0 21 20"><path d="M6.5 9.8 V18 a.8 .8 0 0 0 .8 .8 h11 a.8 .8 0 0 0 .8 -.8 V7.5 l-4.6 -4.6 H12" fill="none" stroke="#c5c5c5" stroke-width="1.5"/>
<path d="M14.3 3 v4.7 h4.7" fill="none" stroke="#c5c5c5" stroke-width="1.3"/>
<path d="M2 9.8 v-1.3 a3 3 0 0 1 3 -3 h4.6 M7.3 2.7 l2.7 2.8 l-2.7 2.8" fill="none" stroke="#c5c5c5" stroke-width="1.5"/></svg>
<svg style="left:1593.5px;top:21.5px;" width="17" height="17" viewBox="0 0 17 17"><rect x=".9" y=".9" width="15.2" height="15.2" rx="1.5" fill="none" stroke="#c5c5c5" stroke-width="1.6"/><path d="M8.5 1 v15" stroke="#c5c5c5" stroke-width="1.6"/></svg>
<svg style="left:1631px;top:28px;" width="18" height="6" viewBox="0 0 18 6"><circle cx="2.3" cy="2.7" r="1.35" fill="#c5c5c5"/><circle cx="8.8" cy="2.7" r="1.35" fill="#c5c5c5"/><circle cx="15.3" cy="2.7" r="1.35" fill="#c5c5c5"/></svg>
<!-- ===== breadcrumbs ===== -->
<div style="left:309px;top:50.6px;width:1367px;height:26.4px;background:#1e1e1e;"></div>
<div style="left:309px;top:77px;width:1226px;height:4.5px;background:transparent;background:linear-gradient(#000000d0,#00000000);"></div>
<span style="left:328.00px;top:54.96px;font-size:15.4px;line-height:20px;color:#a9a9a9;letter-spacing:-1.306px;">C:</span>
<svg style="left:348.40000000000003px;top:59.3px;" width="7.8" height="12.6" viewBox="0 0 7.8 12.6"><path d="M1 1 L6.8 6.3 L1 11.6" fill="none" stroke="#8c8c8c" stroke-width="1.15"/></svg>
<span style="left:361.00px;top:54.96px;font-size:15.4px;line-height:20px;color:#a9a9a9;letter-spacing:-0.501px;">Users</span>
<svg style="left:404.40000000000003px;top:59.3px;" width="7.8" height="12.6" viewBox="0 0 7.8 12.6"><path d="M1 1 L6.8 6.3 L1 11.6" fill="none" stroke="#8c8c8c" stroke-width="1.15"/></svg>
<span style="left:417.70px;top:54.96px;font-size:15.4px;line-height:20px;color:#a9a9a9;letter-spacing:0.336px;">Mohammad Ahmer</span>
<svg style="left:557.6999999999999px;top:59.3px;" width="7.8" height="12.6" viewBox="0 0 7.8 12.6"><path d="M1 1 L6.8 6.3 L1 11.6" fill="none" stroke="#8c8c8c" stroke-width="1.15"/></svg>
<span style="left:571.00px;top:54.96px;font-size:15.4px;line-height:20px;color:#a9a9a9;letter-spacing:0.132px;">AppData</span>
<svg style="left:637.6999999999999px;top:59.3px;" width="7.8" height="12.6" viewBox="0 0 7.8 12.6"><path d="M1 1 L6.8 6.3 L1 11.6" fill="none" stroke="#8c8c8c" stroke-width="1.15"/></svg>
<span style="left:650.80px;top:54.96px;font-size:15.4px;line-height:20px;color:#a9a9a9;letter-spacing:-0.149px;">Roaming</span>
<svg style="left:717.6px;top:59.3px;" width="7.8" height="12.6" viewBox="0 0 7.8 12.6"><path d="M1 1 L6.8 6.3 L1 11.6" fill="none" stroke="#8c8c8c" stroke-width="1.15"/></svg>
<span style="left:731.40px;top:54.96px;font-size:15.4px;line-height:20px;color:#a9a9a9;letter-spacing:-0.332px;">Code</span>
<svg style="left:773.6px;top:59.3px;" width="7.8" height="12.6" viewBox="0 0 7.8 12.6"><path d="M1 1 L6.8 6.3 L1 11.6" fill="none" stroke="#8c8c8c" stroke-width="1.15"/></svg>
<span style="left:786.50px;top:54.96px;font-size:15.4px;line-height:20px;color:#a9a9a9;letter-spacing:-0.600px;">User</span>
<svg style="left:823.6px;top:59.3px;" width="7.8" height="12.6" viewBox="0 0 7.8 12.6"><path d="M1 1 L6.8 6.3 L1 11.6" fill="none" stroke="#8c8c8c" stroke-width="1.15"/></svg>
<svg style="left:836px;top:56.9px;" width="18.525" height="15.2" viewBox="0 0 19.5 16"><path d="M5.2 .8 H4.3 a2 2 0 0 0 -2 2 v3 a2 2 0 0 1 -1.6 2.2 a2 2 0 0 1 1.6 2.2 v3 a2 2 0 0 0 2 2 h.9 M14.3 .8 h.9 a2 2 0 0 1 2 2 v3 a2 2 0 0 0 1.6 2.2 a2 2 0 0 0 -1.6 2.2 v3 a2 2 0 0 1 -2 2 h-.9" fill="none" stroke="#fbc02d" stroke-width="1.7"/>
<circle cx="6.6" cy="10.4" r=".95" fill="#fbc02d"/><circle cx="9.75" cy="10.4" r=".95" fill="#fbc02d"/><circle cx="12.9" cy="10.4" r=".95" fill="#fbc02d"/></svg>
<span style="left:863.00px;top:54.96px;font-size:15.4px;line-height:20px;color:#a9a9a9;letter-spacing:-0.014px;">settings.json</span>
<svg style="left:954.6px;top:59.3px;" width="7.8" height="12.6" viewBox="0 0 7.8 12.6"><path d="M1 1 L6.8 6.3 L1 11.6" fill="none" stroke="#8c8c8c" stroke-width="1.15"/></svg>
<span style="left:968.00px;top:54.96px;font-size:15.4px;line-height:20px;color:#a9a9a9;letter-spacing:-1.214px;">...</span>
<!-- ===== bottom panel (output) ===== -->
<div style="left:309px;top:634.8px;width:1367px;height:1px;background:#414141;"></div>
<span style="left:333.00px;top:648.93px;font-size:13.2px;line-height:17px;color:#969696;letter-spacing:-1.128px;">PROBLEMS</span>
<span style="left:421.40px;top:648.93px;font-size:13.2px;line-height:17px;color:#e7e7e7;letter-spacing:-0.884px;">OUTPUT</span>
<div style="left:421.7px;top:673.6px;width:49.3px;height:1px;background:#e7e7e7;"></div>
<span style="left:495.10px;top:648.93px;font-size:13.2px;line-height:17px;color:#969696;letter-spacing:-0.980px;">DEBUG CONSOLE</span>
<span style="left:621.40px;top:648.93px;font-size:13.2px;line-height:17px;color:#969696;letter-spacing:-0.555px;">TERMINAL</span>
<div style="left:1254px;top:644px;width:204px;height:28px;background:#3c3c3c;"></div>
<span style="left:1264.70px;top:647.96px;font-size:15.4px;line-height:20px;color:#f0f0f0;letter-spacing:-0.111px;">Live Sass Compile</span>
<svg style="left:1436.5px;top:652.5px;" width="12.0" height="7.6" viewBox="0 0 12.0 7.6"><path d="M1 1 L6 6.6 L11 1" fill="none" stroke="#cccccc" stroke-width="1.3"/></svg>
<svg style="left:1477.5px;top:650.5px;" width="18.2" height="14.6" viewBox="0 0 20 16"><path d="M.5 2.2 h17.5 M.5 6.4 h17.5 M.5 10.6 h10.5 M.5 14.8 h10.5 M13 10.2 l5.2 5.2 M18.2 10.2 l-5.2 5.2" fill="none" stroke="#c5c5c5" stroke-width="1.5"/></svg>
<svg style="left:1516.5px;top:649px;" width="17" height="17" viewBox="0 0 17 17"><rect x="1" y="7.8" width="14.6" height="8" rx="1.2" fill="none" stroke="#c5c5c5" stroke-width="1.5"/><path d="M4 7.5 V5 a4.2 4.2 0 0 1 8.2 -1.2" fill="none" stroke="#c5c5c5" stroke-width="1.5"/></svg>
<svg style="left:1554px;top:647.5px;" width="21" height="20" viewBox="0 0 21 20"><path d="M6.5 9.8 V18 a.8 .8 0 0 0 .8 .8 h11 a.8 .8 0 0 0 .8 -.8 V7.5 l-4.6 -4.6 H12" fill="none" stroke="#6b6b6b" stroke-width="1.5"/>
<path d="M14.3 3 v4.7 h4.7" fill="none" stroke="#6b6b6b" stroke-width="1.3"/>
<path d="M2 9.8 v-1.3 a3 3 0 0 1 3 -3 h4.6 M7.3 2.7 l2.7 2.8 l-2.7 2.8" fill="none" stroke="#6b6b6b" stroke-width="1.5"/></svg>
<svg style="left:1595px;top:653px;" width="14" height="8" viewBox="0 0 14 8"><path d="M1 7 L7 1 L13 7" fill="none" stroke="#c5c5c5" stroke-width="1.4"/></svg>
<svg style="left:1634px;top:651.5px;" width="12" height="12" viewBox="0 0 12 12"><path d="M.8 .8 L11.2 11.2 M11.2 .8 L.8 11.2" fill="none" stroke="#c5c5c5" stroke-width="1.4"/></svg>
<span style="left:333.30px;top:678.71px;font-size:15px;line-height:20px;color:#cccccc;font-family:'DejaVu Sans Mono', 'Liberation Mono', monospace;letter-spacing:0.214px;">Compiling Sass/Scss Files:</span>
<span style="left:333.30px;top:701.48px;font-size:15px;line-height:20px;color:#cccccc;font-family:'DejaVu Sans Mono', 'Liberation Mono', monospace;letter-spacing:0.214px;">d:\ahmer\web development\projects\S                                     d\sass\main.scss</span>
<div style="left:333.3px;top:720.9699999999999px;width:812.9000000000001px;height:1px;background:#cccccc;"></div>
<span style="left:333.30px;top:724.25px;font-size:15px;line-height:20px;color:#cccccc;font-family:'DejaVu Sans Mono', 'Liberation Mono', monospace;letter-spacing:0.214px;">--------------------</span>
<span style="left:333.30px;top:747.02px;font-size:15px;line-height:20px;color:#cccccc;font-family:'DejaVu Sans Mono', 'Liberation Mono', monospace;letter-spacing:0.214px;">Generated :</span>
<span style="left:333.30px;top:769.79px;font-size:15px;line-height:20px;color:#cccccc;font-family:'DejaVu Sans Mono', 'Liberation Mono', monospace;letter-spacing:0.214px;">d:\ahmer\web development\projects\Sa                                   id\css\main.min.css</span>
<div style="left:333.3px;top:789.28px;width:831.2px;height:1px;background:#cccccc;"></div>
<span style="left:333.30px;top:792.56px;font-size:15px;line-height:20px;color:#cccccc;font-family:'DejaVu Sans Mono', 'Liberation Mono', monospace;letter-spacing:0.214px;">d:\ahmer\web development\projects\Sa                                   id\css\main.min.css.map</span>
<div style="left:333.3px;top:812.05px;width:868.2px;height:1px;background:#cccccc;"></div>
<span style="left:333.30px;top:815.33px;font-size:15px;line-height:20px;color:#cccccc;font-family:'DejaVu Sans Mono', 'Liberation Mono', monospace;letter-spacing:0.214px;">--------------------</span>
<span style="left:333.30px;top:838.10px;font-size:15px;line-height:20px;color:#cccccc;font-family:'DejaVu Sans Mono', 'Liberation Mono', monospace;letter-spacing:0.214px;">Watching...</span>
<span style="left:333.30px;top:860.87px;font-size:15px;line-height:20px;color:#cccccc;font-family:'DejaVu Sans Mono', 'Liberation Mono', monospace;letter-spacing:0.214px;">--------------------</span>
<div style="left:657.5px;top:699px;width:342px;height:22.6px;background:#808080;"></div>
<div style="left:659.6px;top:771px;width:333px;height:40.6px;background:#808080;"></div>
<div style="left:1655px;top:677px;width:1px;height:291.5px;background:#3a3a3a;"></div>
<div style="left:1655px;top:677px;width:21px;height:1px;background:#333333;"></div>
<div style="left:1656px;top:880.9px;width:20px;height:2px;background:#9a9a9a;"></div>
<!-- ===== status bar ===== -->
<div style="left:0px;top:968.5px;width:1676px;height:25.5px;background:#007acc;"></div>
<div style="left:0px;top:994px;width:1676px;height:2px;background:#16304a;"></div>
<div style="left:212px;top:994px;width:36px;height:2px;background:#5d6670;"></div>
<div style="left:1670px;top:990px;width:10px;height:6px;background:#ffffff;"></div>
<svg style="left:8px;top:972px;" width="16" height="19" viewBox="0 0 16 19"><circle cx="3.7" cy="3.6" r="2.3" fill="none" stroke="#ffffff" stroke-width="1.4"/><circle cx="3.7" cy="15.4" r="2.3" fill="none" stroke="#ffffff" stroke-width="1.4"/><circle cx="11.8" cy="5.6" r="2.3" fill="none" stroke="#ffffff" stroke-width="1.4"/>
<path d="M3.7 6 V13 M11.8 8 c0 4 -8 2.5 -8 5.5" fill="none" stroke="#ffffff" stroke-width="1.4"/></svg>
<span style="left:28.20px;top:973.65px;font-size:14.3px;line-height:19px;color:#ffffff;letter-spacing:-0.011px;">master*</span>
<svg style="left:96.5px;top:975px;" width="17" height="14" viewBox="0 0 17 14"><path d="M5 10.5 H4 a3.2 3.2 0 0 1 -.3 -6.4 a4.6 4.6 0 0 1 9 .6 a2.9 2.9 0 0 1 .3 5.8 h-1" fill="none" stroke="#ffffff" stroke-width="1.3"/><path d="M8.5 13.5 V6.5 M5.8 9 l2.7 -2.7 l2.7 2.7" fill="none" stroke="#ffffff" stroke-width="1.3"/></svg>
<svg style="left:132.5px;top:973.5px;" width="16" height="16" viewBox="0 0 16 16"><circle cx="8" cy="8" r="7" fill="none" stroke="#ffffff" stroke-width="1.3"/><path d="M5.2 5.2 l5.6 5.6 M10.8 5.2 l-5.6 5.6" stroke="#ffffff" stroke-width="1.3" fill="none"/></svg>
<span style="left:153.20px;top:973.65px;font-size:14.3px;line-height:19px;color:#ffffff;">0</span>
<svg style="left:165.5px;top:973.5px;" width="16" height="15" viewBox="0 0 16 15"><path d="M8 1.3 L15 13.7 H1 Z" fill="none" stroke="#ffffff" stroke-width="1.3" stroke-linejoin="round"/><path d="M8 5.5 v4.5 M8 11 v1.5" stroke="#ffffff" stroke-width="1.3"/></svg>
<span style="left:185.50px;top:973.65px;font-size:14.3px;line-height:19px;color:#ffffff;">0</span>
<div style="left:852px;top:968.5px;width:102.3px;height:25.5px;background:#1f8ad2;"></div>
<svg style="left:859.5px;top:973px;" width="15" height="16" viewBox="0 0 15 16"><path d="M1.3 7.8 L10.6 1.8 L13.3 5.8 L3.6 10.8 Z" fill="none" stroke="#ffffff" stroke-width="1.3" stroke-linejoin="round"/><path d="M8 3.6 l2.5 4 M4.8 5.7 l2.3 3.6" stroke="#ffffff" stroke-width="1.1"/><path d="M7 9 V15 M7 9.5 L3.5 15 M7 9.5 L10.5 15" stroke="#ffffff" stroke-width="1.3" fill="none"/></svg>
<span style="left:878.70px;top:973.65px;font-size:14.3px;line-height:19px;color:#ffffff;letter-spacing:-0.128px;">Watching...</span>
<span style="left:967.20px;top:973.65px;font-size:14.3px;line-height:19px;color:#ffffff;letter-spacing:-0.310px;">Ln 41, Col 1</span>
<span style="left:1060.20px;top:973.65px;font-size:14.3px;line-height:19px;color:#ffffff;letter-spacing:-0.612px;">Spaces: 2</span>
<span style="left:1138.20px;top:973.65px;font-size:14.3px;line-height:19px;color:#ffffff;letter-spacing:-0.579px;">UTF-8</span>
<span style="left:1195.20px;top:973.65px;font-size:14.3px;line-height:19px;color:#ffffff;letter-spacing:-1.715px;">CRLF</span>
<span style="left:1245.70px;top:973.65px;font-size:14.3px;line-height:19px;color:#ffffff;letter-spacing:-0.113px;">JSON with Comments</span>
<svg style="left:1403.5px;top:973.3px;" width="17" height="17" viewBox="0 0 17 17"><circle cx="8.5" cy="8.5" r="7.2" fill="none" stroke="#ffffff" stroke-width="1.4"/><path d="M3.6 13.4 L13.4 3.6" stroke="#ffffff" stroke-width="1.4"/></svg>
<span style="left:1424.00px;top:973.65px;font-size:14.3px;line-height:19px;color:#ffffff;letter-spacing:-0.185px;">Port : 5500</span>
<span style="left:1511.70px;top:973.65px;font-size:14.3px;line-height:19px;color:#ffffff;letter-spacing:-0.170px;">Prettier:</span>
<svg style="left:1565px;top:975px;" width="16" height="12" viewBox="0 0 16 12"><path d="M1 6.5 L5.5 11 L15 1" fill="none" stroke="#ffffff" stroke-width="1.5"/></svg>
<svg style="left:1600px;top:972.5px;" width="18" height="17" viewBox="0 0 18 17"><path d="M5 4.5 V1 h12 v8 h-3 l-2.5 2.5 V9.5" fill="none" stroke="#ffffff" stroke-width="1.3"/><circle cx="6" cy="8.5" r="2.8" fill="none" stroke="#ffffff" stroke-width="1.3"/><path d="M1 16.5 c0 -3.5 2 -5 5 -5 s5 1.5 5 5" fill="none" stroke="#ffffff" stroke-width="1.3"/></svg>
<svg style="left:1636px;top:972px;" width="18" height="18" viewBox="0 0 18 18"><path d="M8.5 2 a5 5 0 0 0 -5.3 5 v4.5 l-1.7 2.5 h12.5 l-1.5 -2.5 v-2" fill="none" stroke="#ffffff" stroke-width="1.3" stroke-linejoin="round"/><path d="M6 14.2 a1.8 1.8 0 0 0 3.6 0" fill="none" stroke="#ffffff" stroke-width="1.3"/><circle cx="12.5" cy="4.5" r="3.3" fill="#ffffff"/></svg>
</div>
</body>
</html>
